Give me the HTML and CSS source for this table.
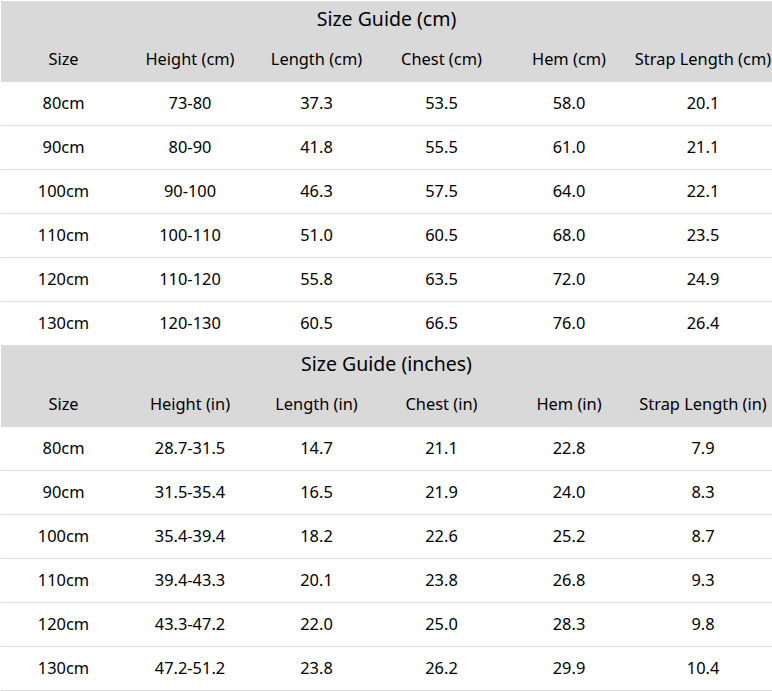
FILE: index.html
```html
<!DOCTYPE html>
<html>
<head>
<meta charset="utf-8">
<link rel="stylesheet" href="styles.css">
</head>
<body>
<div class="page">
<table class="guide">
  <colgroup><col class="c1"><col class="c2"><col class="c3"><col class="c4"><col class="c5"><col class="c6"></colgroup>
  <thead>
    <tr class="title"><th colspan="6">Size Guide (cm)</th></tr>
    <tr class="head"><th>Size</th><th>Height (cm)</th><th>Length (cm)</th><th>Chest (cm)</th><th>Hem (cm)</th><th>Strap Length (cm)</th></tr>
  </thead>
  <tbody>
    <tr><td>80cm</td><td>73-80</td><td>37.3</td><td>53.5</td><td>58.0</td><td>20.1</td></tr>
    <tr><td>90cm</td><td>80-90</td><td>41.8</td><td>55.5</td><td>61.0</td><td>21.1</td></tr>
    <tr><td>100cm</td><td>90-100</td><td>46.3</td><td>57.5</td><td>64.0</td><td>22.1</td></tr>
    <tr><td>110cm</td><td>100-110</td><td>51.0</td><td>60.5</td><td>68.0</td><td>23.5</td></tr>
    <tr><td>120cm</td><td>110-120</td><td>55.8</td><td>63.5</td><td>72.0</td><td>24.9</td></tr>
    <tr><td>130cm</td><td>120-130</td><td>60.5</td><td>66.5</td><td>76.0</td><td>26.4</td></tr>
  </tbody>
</table>
<table class="guide">
  <colgroup><col class="c1"><col class="c2"><col class="c3"><col class="c4"><col class="c5"><col class="c6"></colgroup>
  <thead>
    <tr class="title"><th colspan="6">Size Guide (inches)</th></tr>
    <tr class="head"><th>Size</th><th>Height (in)</th><th>Length (in)</th><th>Chest (in)</th><th>Hem (in)</th><th>Strap Length (in)</th></tr>
  </thead>
  <tbody>
    <tr><td>80cm</td><td>28.7-31.5</td><td>14.7</td><td>21.1</td><td>22.8</td><td>7.9</td></tr>
    <tr><td>90cm</td><td>31.5-35.4</td><td>16.5</td><td>21.9</td><td>24.0</td><td>8.3</td></tr>
    <tr><td>100cm</td><td>35.4-39.4</td><td>18.2</td><td>22.6</td><td>25.2</td><td>8.7</td></tr>
    <tr><td>110cm</td><td>39.4-43.3</td><td>20.1</td><td>23.8</td><td>26.8</td><td>9.3</td></tr>
    <tr><td>120cm</td><td>43.3-47.2</td><td>22.0</td><td>25.0</td><td>28.3</td><td>9.8</td></tr>
    <tr><td>130cm</td><td>47.2-51.2</td><td>23.8</td><td>26.2</td><td>29.9</td><td>10.4</td></tr>
  </tbody>
</table>
</div>
</body>
</html>
```

FILE: styles.css
```css
html, body {
  margin: 0;
  padding: 0;
  background: #fff;
  overflow: hidden;
}
.page {
  padding: 1px 0 0 1px;
  font-family: "Noto Sans", "Open Sans", sans-serif;
  color: #000;
}
.guide {
  width: 771px;
  border-collapse: collapse;
  table-layout: fixed;
  border-spacing: 0;
}
.c1 { width: 125px; }
.c2 { width: 128px; }
.c3 { width: 125px; }
.c4 { width: 125px; }
.c5 { width: 130px; }
.c6 { width: 138px; }
.guide th, .guide td {
  padding: 0;
  text-align: center;
  font-weight: normal;
  white-space: nowrap;
  overflow: visible;
}
.guide thead {
  background: #d9d9d9;
}
.title th {
  height: 37px;
  font-size: 19.5px;
  line-height: 35px;
  padding-bottom: 2px;
  box-sizing: border-box;
}
.head th {
  height: 44px;
  font-size: 16.4px;
  line-height: 42px;
  padding-bottom: 2px;
  box-sizing: border-box;
}
.guide tbody td {
  height: 43px;
  font-size: 16.4px;
  line-height: 41px;
  padding-bottom: 2px;
  box-sizing: border-box;
  border-bottom: 1px solid #dcdcdc;
}
```
